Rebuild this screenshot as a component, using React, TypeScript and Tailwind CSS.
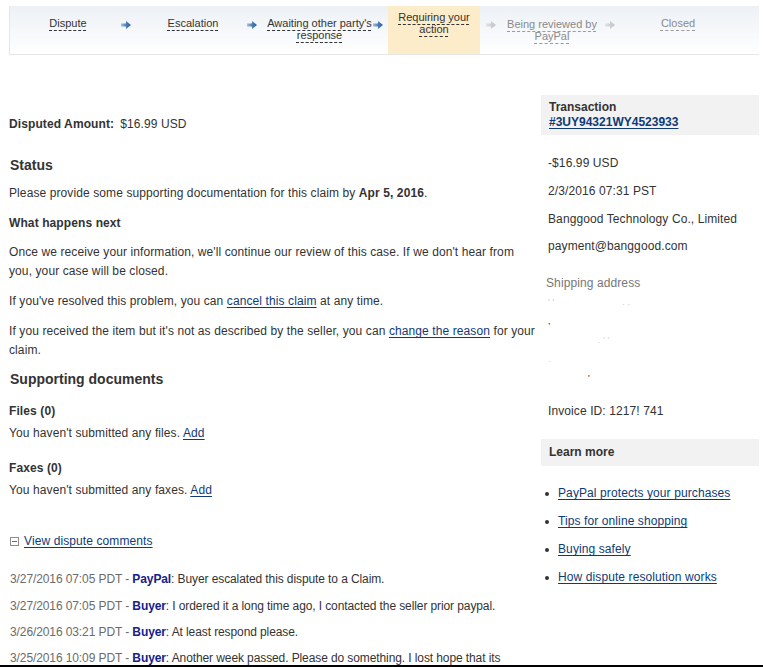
import React from "react";

const LINK = "text-[#0e3a78] underline underline-offset-[2px] decoration-[#0e3a78]";

function Arrow({ gray }: { gray?: boolean }) {
  const id = gray ? "ag" : "ab";
  return (
    <svg width="10" height="8" viewBox="0 0 10 8" className="block">
      <defs>
        <linearGradient id={id} x1="0" x2="1" y1="0" y2="0">
          <stop offset="0" stopColor={gray ? "#e6e6e6" : "#a9c1dd"} />
          <stop offset="0.5" stopColor={gray ? "#cfcfcf" : "#4f7fb8"} />
          <stop offset="1" stopColor={gray ? "#c4c4c4" : "#2c5f9e"} />
        </linearGradient>
      </defs>
      <polygon points="0,2.5 5,2.5 5,0 10,4 5,8 5,5.5 0,5.5" fill={`url(#${id})`} />
    </svg>
  );
}

function StepText({ lines, gray }: { lines: string[]; gray?: boolean }) {
  return (
    <div className={`text-center text-[11px] leading-[12px] whitespace-nowrap ${gray ? "text-[#8a8a8a]" : "text-[#333]"}`}>
      {lines.map((l, i) => (
        <div key={i}>
          <span className={`underline decoration-dashed underline-offset-[3px] ${gray ? "decoration-[#9a9a9a]" : "decoration-[#333]"}`}>{l}</span>
        </div>
      ))}
    </div>
  );
}

function Stepper() {
  return (
    <div className="mt-[6px] ml-[9px] w-[750px] h-[49px] flex items-start border-l border-b border-[#e6e6e6] bg-linear-to-b from-[#edf1f6] to-white">
      <div className="w-[111px] pl-[5px] pt-[11px]"><StepText lines={["Dispute"]} /></div>
      <div className="w-[9px] mt-[15px]"><Arrow /></div>
      <div className="w-[117px] pl-[9px] pt-[11px]"><StepText lines={["Escalation"]} /></div>
      <div className="w-[9px] mt-[15px]"><Arrow /></div>
      <div className="w-[117px] pl-[10px] pt-[11px]"><StepText lines={["Awaiting other party's", "response"]} /></div>
      <div className="w-[8px] mt-[15px]"><Arrow /></div>
      <div className="w-[105px] pl-[7px] pr-[6px]">
        <div className="h-[48px] bg-[#fdecca] pt-[5px]"><StepText lines={["Requiring your", "action"]} /></div>
      </div>
      <div className="w-[8px] mt-[15px]"><Arrow gray /></div>
      <div className="w-[111px] pl-[5px] pt-[12px]"><StepText gray lines={["Being reviewed by", "PayPal"]} /></div>
      <div className="w-[8px] mt-[15px]"><Arrow gray /></div>
      <div className="flex-1 pr-[16px] pt-[11px]"><StepText gray lines={["Closed"]} /></div>
    </div>
  );
}

const comments = [
  { date: "3/27/2016 07:05 PDT", who: "PayPal", text: "Buyer escalated this dispute to a Claim.", mt: "" },
  { date: "3/27/2016 07:05 PDT", who: "Buyer", text: "I ordered it a long time ago, I contacted the seller prior paypal.", mt: "mt-[8px]" },
  { date: "3/26/2016 03:21 PDT", who: "Buyer", text: "At least respond please.", mt: "mt-[7px]" },
  { date: "3/25/2016 10:09 PDT", who: "Buyer", text: "Another week passed. Please do something. I lost hope that its", mt: "mt-[7px]" },
];

function Left() {
  return (
    <div className="w-[528px] pt-[60px] text-[12px] leading-[19px] tracking-[0.1px] text-[#333]">
      <div className="flex">
        <span className="font-bold">Disputed Amount:</span>
        <span className="ml-[6px]">$16.99 USD</span>
      </div>
      <div className="mt-[22px] pl-[1px] text-[14px] font-bold tracking-normal">Status</div>
      <p className="mt-[9px]">
        Please provide some supporting documentation for this claim by <span className="font-bold">Apr 5, 2016</span>.
      </p>
      <p className="mt-[11px] font-bold">What happens next</p>
      <p className="mt-[10px]">
        Once we receive your information, we'll continue our review of this case. If we don't hear from you, your case will be closed.
      </p>
      <p className="mt-[11px]">
        If you've resolved this problem, you can <span className={LINK}>cancel this claim</span> at any time.
      </p>
      <p className="mt-[11px]">
        If you received the item but it's not as described by the seller, you can <span className={LINK}>change the reason</span> for your claim.
      </p>
      <div className="mt-[10px] pl-[1px] text-[14px] font-bold tracking-normal">Supporting documents</div>
      <div className="mt-[13px] font-bold">Files (0)</div>
      <div className="mt-[3px]">
        You haven't submitted any files. <span className={LINK}>Add</span>
      </div>
      <div className="mt-[16px] font-bold">Faxes (0)</div>
      <div className="mt-[3px]">
        You haven't submitted any faxes. <span className={LINK}>Add</span>
      </div>
      <div className="mt-[32px] flex items-center pl-[1px]">
        <span className="w-[9px] h-[9px] border border-[#8c8c8c] flex items-center justify-center">
          <span className="w-[5px] h-px bg-[#6c6c6c]" />
        </span>
        <span className={`ml-[5px] ${LINK}`}>View dispute comments</span>
      </div>
      <div className="mt-[19px] pl-[1px] tracking-[-0.1px] whitespace-nowrap">
        {comments.map((c, i) => (
          <div key={i} className={c.mt}>
            <span className="text-[#6b6b6b]">{c.date} - </span>
            <span className="font-bold text-[#14208c]">{c.who}</span>
            <span>: {c.text}</span>
          </div>
        ))}
      </div>
    </div>
  );
}

function Right() {
  return (
    <div className="ml-[4px] w-[218px] pt-[40px] text-[12px] leading-[19px] tracking-[0.1px] text-[#333]">
      <div className="h-[40px] bg-[#f2f2f2] pl-[8px] pt-[5px] leading-[15px] font-bold tracking-normal">
        <div>Transaction</div>
        <div className={LINK}>#3UY94321WY4523933</div>
      </div>
      <div className="pl-[7px]">
        <div className="mt-[19px]">-$16.99 USD</div>
        <div className="mt-[9px]">2/3/2016 07:31 PST</div>
        <div className="mt-[9px]">Banggood Technology Co., Limited</div>
        <div className="mt-[8px]">payment@banggood.com</div>
      </div>
      <div className="pl-[5px] mt-[18px] text-[#777]">Shipping address</div>
      <div className="pl-[7px] h-[95px] text-[#888] text-[9px] leading-[19px]">
        <div className="flex gap-[68px] text-[#c9c9c9]"><span>' '</span><span>. .</span></div>
        <div className="text-[#222]">,</div>
        <div className="flex gap-[30px] text-[#d4d4d4]"><span className="w-[20px]" /><span>. ' '</span></div>
        <div className="text-[#d0d0d0]">.</div>
        <div className="pl-[40px] text-[#222]">'</div>
      </div>
      <div className="pl-[7px] mt-[14px]">Invoice ID: 1217! 741</div>
      <div className="mt-[18px] h-[27px] bg-[#f2f2f2] pl-[8px] flex items-center font-bold tracking-normal">Learn more</div>
      <div className="mt-[18px]">
        {["PayPal protects your purchases", "Tips for online shopping", "Buying safely", "How dispute resolution works"].map((t, i) => (
          <div key={i} className={`flex items-center ${i === 0 ? "" : "mt-[9px]"}`}>
            <span className="ml-[4px] w-[4px] h-[4px] rounded-full bg-[#333]" />
            <span className={`ml-[9px] ${LINK}`}>{t}</span>
          </div>
        ))}
      </div>
    </div>
  );
}

export default function App() {
  return (
    <div className="h-[667px] w-[763px] overflow-hidden flex flex-col bg-white font-['Liberation_Sans',Arial,sans-serif]">
      <div className="flex-1 overflow-hidden">
        <Stepper />
        <div className="flex ml-[9px]">
          <Left />
          <Right />
        </div>
      </div>
      <div className="h-[2px] bg-black" />
    </div>
  );
}
